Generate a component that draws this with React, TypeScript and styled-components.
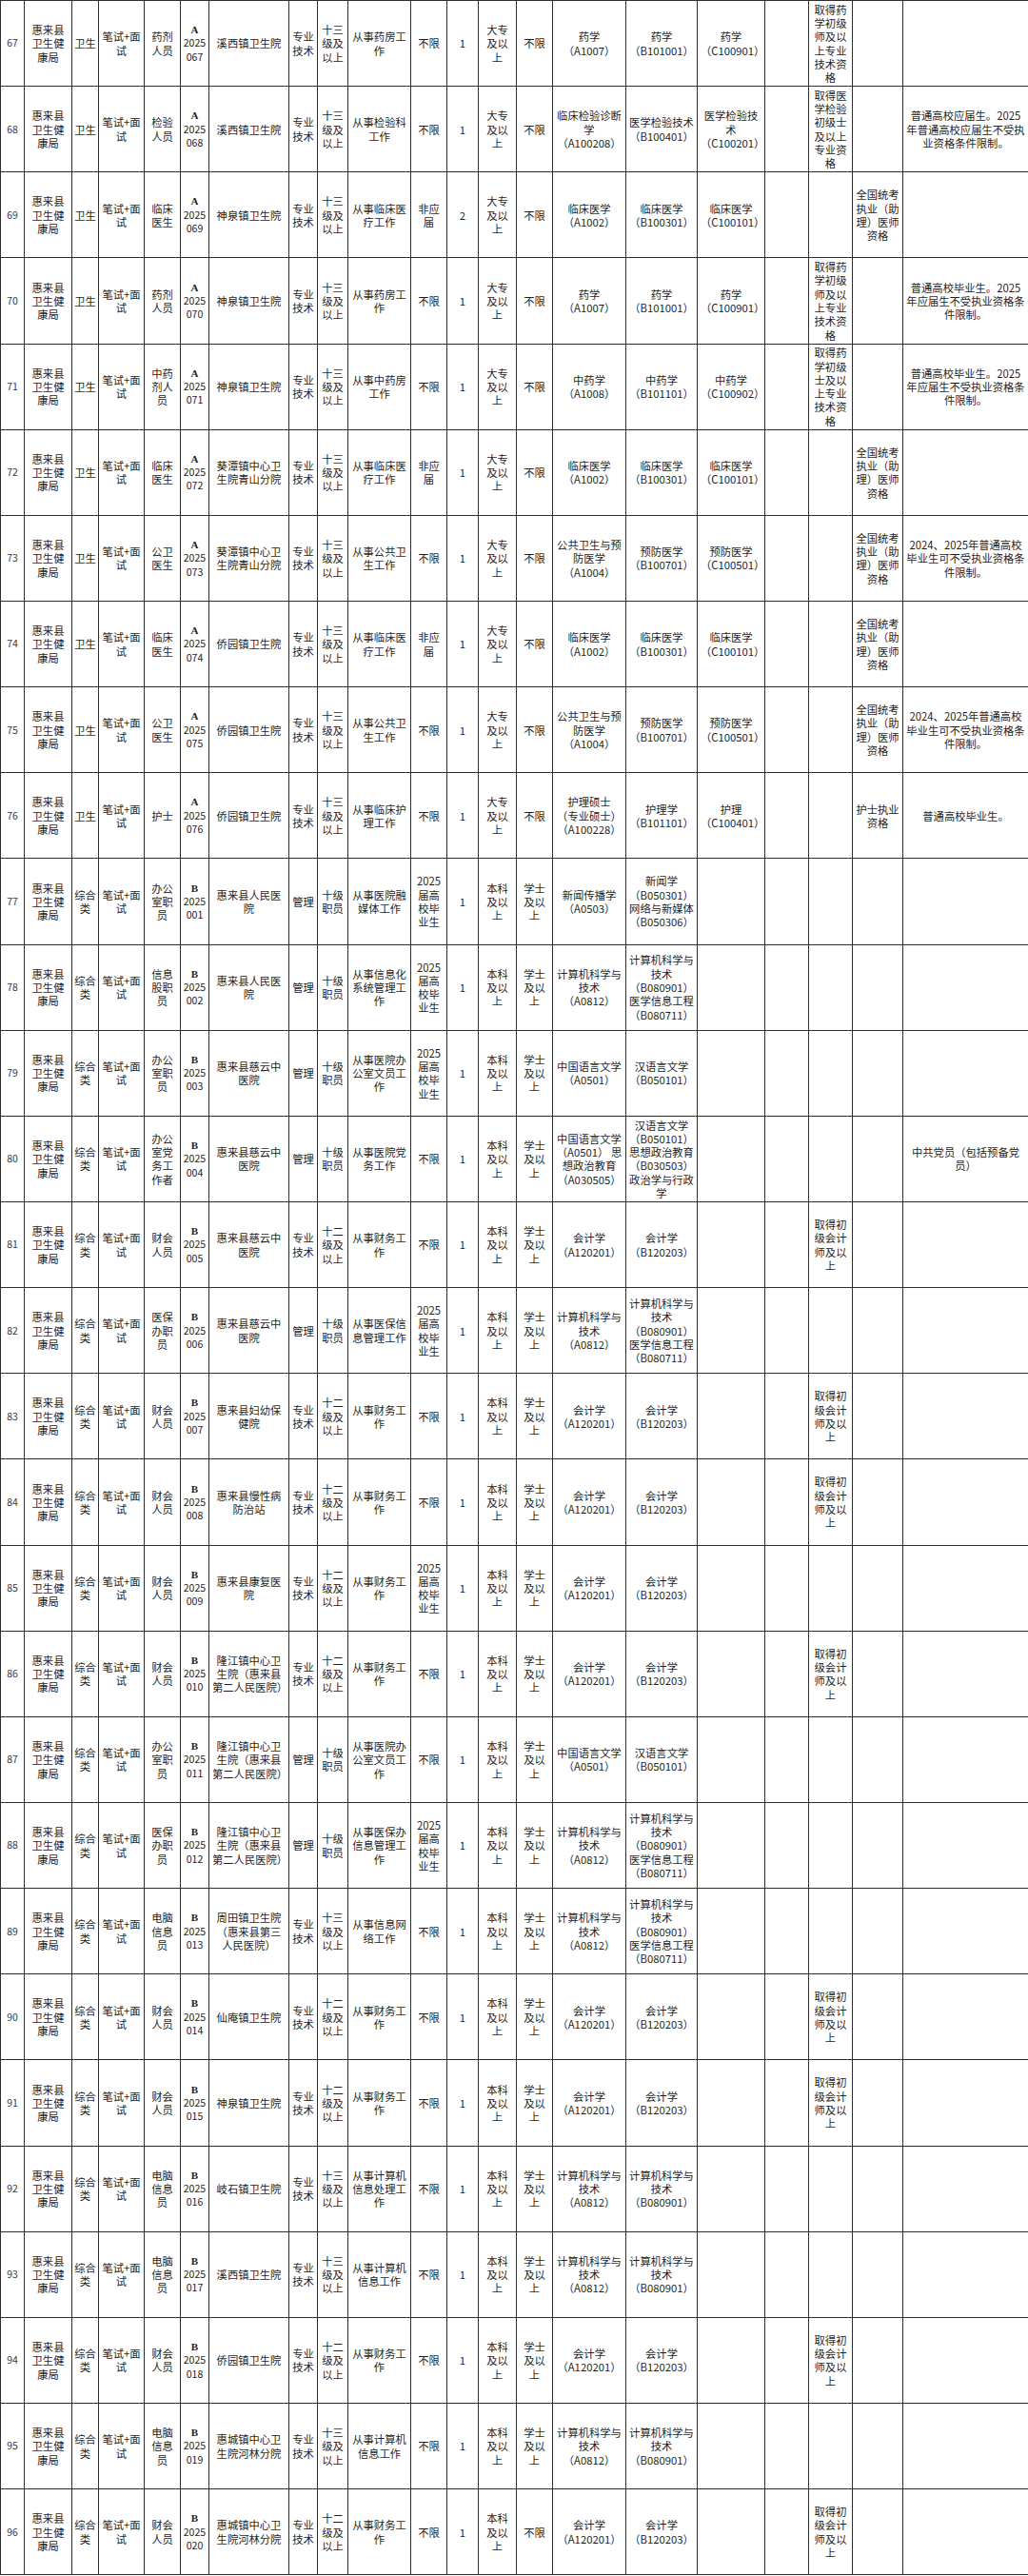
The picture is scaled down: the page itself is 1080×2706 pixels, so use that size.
import React from 'react';
import styled, { createGlobalStyle } from 'styled-components';

const GlobalStyle = createGlobalStyle`
  html, body {
    margin: 0;
    padding: 0;
    background: #fff;
  }
  body {
    font-family: "Noto Sans CJK SC", "Noto Sans", sans-serif;
    color: #1e1e1e;
  }
`;

const Sheet = styled.table`
  width: 1080px;
  table-layout: fixed;
  border-collapse: collapse;
  font-size: 11.3px;
  line-height: 14.3px;
`;

const Col = styled.col<{ $w: number }>`
  width: ${({ $w }) => $w}px;
`;

const Row = styled.tr`
  height: 90.15px;
`;

const Cell = styled.td<{ $tight?: boolean }>`
  border: 1px solid #2e2e2e;
  padding: 0 ${({ $tight }) => ($tight ? 0 : 3)}px;
  text-align: center;
  vertical-align: middle;
  white-space: pre-line;
  overflow: hidden;
`;

const NoCell = styled(Cell)`
  font-size: 10.5px;
  color: #3a3a3a;
`;

const CodeCell = styled(Cell)`
  font-size: 10.6px;
  padding: 0;
`;

const CodeLetter = styled.span`
  display: block;
  font-family: "Liberation Serif", serif;
  font-weight: bold;
  font-size: 11px;
`;

const CodeLine = styled.span`
  display: block;
`;

// column widths, read off the sheet grid
const widths = [25, 50, 28, 48, 38, 30, 84, 30, 32, 66, 38, 33, 40, 38, 77, 75, 71, 46, 46, 53, 132];

const DEPT = '惠来县卫生健康局';
const EXAM = '笔试+面试';
const T = '专业技术';
const M = '管理';
const L13 = '十三级及以上';
const L12 = '十二级及以上';
const L10 = '十级职员';
const N = '不限';
const DZ = '大专及以上';
const BK = '本科及以上';
const XS = '学士及以上';
const G25 = '2025届高校毕业生';

const YX = ['药学\n（A1007）', '药学\n（B101001）', '药学\n（C100901）'];
const LC = ['临床医学\n（A1002）', '临床医学\n（B100301）', '临床医学\n（C100101）'];
const GW = ['公共卫生与预防医学\n（A1004）', '预防医学\n（B100701）', '预防医学\n（C100501）'];
const JS_A = '计算机科学与技术\n（A0812）';
const JS_B = '计算机科学与技术\n（B080901）';
const JS_B2 = JS_B + '\n医学信息工程\n（B080711）';
const ZW_A = '中国语言文学\n（A0501）';
const ZW_B = '汉语言文学\n（B050101）';
const KJ_A = '会计学\n（A120201）';
const KJ_B = '会计学\n（B120203）';
const CJ = '取得初级会计师及以上';
const YJ = '取得药学初级师及以上专业技术资格';
const ZY = '全国统考执业（助理）医师资格';
const NOTE24 = '2024、2025年普通高校毕业生可不受执业资格条件限制。';
const NOTE_BY = '普通高校毕业生。2025年应届生不受执业资格条件限制。';

type Job = {
  no: string;
  cat: string;
  post: string;
  code: string;
  unit: string;
  kind: string;
  level: string;
  duty: string;
  target: string;
  count: string;
  edu: string;
  degree: string;
  a: string;
  b: string;
  c: string;
  cert: string;
  lic: string;
  note: string;
};

const job = (
  no: string, cat: string, post: string, code: string, unit: string, kind: string, level: string,
  duty: string, target: string, count: string, edu: string, degree: string,
  a: string, b: string, c: string, cert = '', lic = '', note = ''
): Job => ({ no, cat, post, code, unit, kind, level, duty, target, count, edu, degree, a, b, c, cert, lic, note });

const jobs: Job[] = [
  job('67', '卫生', '药剂人员', 'A067', '溪西镇卫生院', T, L13, '从事药房工作', N, '1', DZ, N, YX[0], YX[1], YX[2], YJ),
  job('68', '卫生', '检验人员', 'A068', '溪西镇卫生院', T, L13, '从事检验科工作', N, '1', DZ, N,
    '临床检验诊断学\n（A100208）', '医学检验技术\n（B100401）', '医学检验技术\n（C100201）',
    '取得医学检验初级士及以上专业资格', '', '普通高校应届生。2025年普通高校应届生不受执业资格条件限制。'),
  job('69', '卫生', '临床医生', 'A069', '神泉镇卫生院', T, L13, '从事临床医疗工作', '非应届', '2', DZ, N, LC[0], LC[1], LC[2], '', ZY),
  job('70', '卫生', '药剂人员', 'A070', '神泉镇卫生院', T, L13, '从事药房工作', N, '1', DZ, N, YX[0], YX[1], YX[2], YJ, '', NOTE_BY),
  job('71', '卫生', '中药剂人员', 'A071', '神泉镇卫生院', T, L13, '从事中药房工作', N, '1', DZ, N,
    '中药学\n（A1008）', '中药学\n（B101101）', '中药学\n（C100902）', '取得药学初级士及以上专业技术资格', '', NOTE_BY),
  job('72', '卫生', '临床医生', 'A072', '葵潭镇中心卫生院青山分院', T, L13, '从事临床医疗工作', '非应届', '1', DZ, N, LC[0], LC[1], LC[2], '', ZY),
  job('73', '卫生', '公卫医生', 'A073', '葵潭镇中心卫生院青山分院', T, L13, '从事公共卫生工作', N, '1', DZ, N, GW[0], GW[1], GW[2], '', ZY, NOTE24),
  job('74', '卫生', '临床医生', 'A074', '侨园镇卫生院', T, L13, '从事临床医疗工作', '非应届', '1', DZ, N, LC[0], LC[1], LC[2], '', ZY),
  job('75', '卫生', '公卫医生', 'A075', '侨园镇卫生院', T, L13, '从事公共卫生工作', N, '1', DZ, N, GW[0], GW[1], GW[2], '', ZY, NOTE24),
  job('76', '卫生', '护士', 'A076', '侨园镇卫生院', T, L13, '从事临床护理工作', N, '1', DZ, N,
    '护理硕士\n（专业硕士）\n（A100228）', '护理学\n（B101101）', '护理\n（C100401）', '', '护士执业资格', '普通高校毕业生。'),
  job('77', '综合类', '办公室职员', 'B001', '惠来县人民医院', M, L10, '从事医院融媒体工作', G25, '1', BK, XS,
    '新闻传播学\n（A0503）', '新闻学\n（B050301）\n网络与新媒体\n（B050306）', ''),
  job('78', '综合类', '信息股职员', 'B002', '惠来县人民医院', M, L10, '从事信息化系统管理工作', G25, '1', BK, XS, JS_A, JS_B2, ''),
  job('79', '综合类', '办公室职员', 'B003', '惠来县慈云中医院', M, L10, '从事医院办公室文员工作', G25, '1', BK, XS, ZW_A, ZW_B, ''),
  job('80', '综合类', '办公室党务工作者', 'B004', '惠来县慈云中医院', M, L10, '从事医院党务工作', N, '1', BK, XS,
    '中国语言文学（A0501） 思想政治教育（A030505）', '汉语言文学\n（B050101）\n思想政治教育\n（B030503）\n政治学与行政学', '',
    '', '', '中共党员（包括预备党员）'),
  job('81', '综合类', '财会人员', 'B005', '惠来县慈云中医院', T, L12, '从事财务工作', N, '1', BK, XS, KJ_A, KJ_B, '', CJ),
  job('82', '综合类', '医保办职员', 'B006', '惠来县慈云中医院', M, L10, '从事医保信息管理工作', G25, '1', BK, XS, JS_A, JS_B2, ''),
  job('83', '综合类', '财会人员', 'B007', '惠来县妇幼保健院', T, L12, '从事财务工作', N, '1', BK, XS, KJ_A, KJ_B, '', CJ),
  job('84', '综合类', '财会人员', 'B008', '惠来县慢性病防治站', T, L12, '从事财务工作', N, '1', BK, XS, KJ_A, KJ_B, '', CJ),
  job('85', '综合类', '财会人员', 'B009', '惠来县康复医院', T, L12, '从事财务工作', G25, '1', BK, XS, KJ_A, KJ_B, ''),
  job('86', '综合类', '财会人员', 'B010', '隆江镇中心卫生院（惠来县第二人民医院）', T, L12, '从事财务工作', N, '1', BK, XS, KJ_A, KJ_B, '', CJ),
  job('87', '综合类', '办公室职员', 'B011', '隆江镇中心卫生院（惠来县第二人民医院）', M, L10, '从事医院办公室文员工作', N, '1', BK, XS, ZW_A, ZW_B, ''),
  job('88', '综合类', '医保办职员', 'B012', '隆江镇中心卫生院（惠来县第二人民医院）', M, L10, '从事医保办信息管理工作', G25, '1', BK, XS, JS_A, JS_B2, ''),
  job('89', '综合类', '电脑信息员', 'B013', '周田镇卫生院（惠来县第三人民医院）', T, L13, '从事信息网络工作', N, '1', BK, XS, JS_A, JS_B2, ''),
  job('90', '综合类', '财会人员', 'B014', '仙庵镇卫生院', T, L12, '从事财务工作', N, '1', BK, XS, KJ_A, KJ_B, '', CJ),
  job('91', '综合类', '财会人员', 'B015', '神泉镇卫生院', T, L12, '从事财务工作', N, '1', BK, XS, KJ_A, KJ_B, '', CJ),
  job('92', '综合类', '电脑信息员', 'B016', '岐石镇卫生院', T, L13, '从事计算机信息处理工作', N, '1', BK, XS, JS_A, JS_B, ''),
  job('93', '综合类', '电脑信息员', 'B017', '溪西镇卫生院', T, L13, '从事计算机信息工作', N, '1', BK, XS, JS_A, JS_B, ''),
  job('94', '综合类', '财会人员', 'B018', '侨园镇卫生院', T, L12, '从事财务工作', N, '1', BK, XS, KJ_A, KJ_B, '', CJ),
  job('95', '综合类', '电脑信息员', 'B019', '惠城镇中心卫生院河林分院', T, L13, '从事计算机信息工作', N, '1', BK, XS, JS_A, JS_B, ''),
  job('96', '综合类', '财会人员', 'B020', '惠城镇中心卫生院河林分院', T, L12, '从事财务工作', N, '1', BK, N, KJ_A, KJ_B, '', CJ),
];

const JobRow = ({ j }: { j: Job }) => (
  <Row>
    <NoCell>{j.no}</NoCell>
    <Cell>{DEPT}</Cell>
    <Cell $tight>{j.cat}</Cell>
    <Cell>{EXAM}</Cell>
    <Cell>{j.post}</Cell>
    <CodeCell>
      <CodeLetter>{j.code[0]}</CodeLetter>
      <CodeLine>2025</CodeLine>
      <CodeLine>{j.code.slice(1)}</CodeLine>
    </CodeCell>
    <Cell>{j.unit}</Cell>
    <Cell>{j.kind}</Cell>
    <Cell>{j.level}</Cell>
    <Cell>{j.duty}</Cell>
    <Cell>{j.target}</Cell>
    <Cell>{j.count}</Cell>
    <Cell>{j.edu}</Cell>
    <Cell>{j.degree}</Cell>
    <Cell>{j.a}</Cell>
    <Cell>{j.b}</Cell>
    <Cell>{j.c}</Cell>
    <Cell />
    <Cell>{j.cert}</Cell>
    <Cell>{j.lic}</Cell>
    <Cell>{j.note}</Cell>
  </Row>
);

export default function App() {
  return (
    <>
      <GlobalStyle />
      <Sheet>
        <colgroup>
          {widths.map((w, i) => (
            <Col key={i} $w={w} />
          ))}
        </colgroup>
        <tbody>
          {jobs.map((j) => (
            <JobRow key={j.no} j={j} />
          ))}
        </tbody>
      </Sheet>
    </>
  );
}
